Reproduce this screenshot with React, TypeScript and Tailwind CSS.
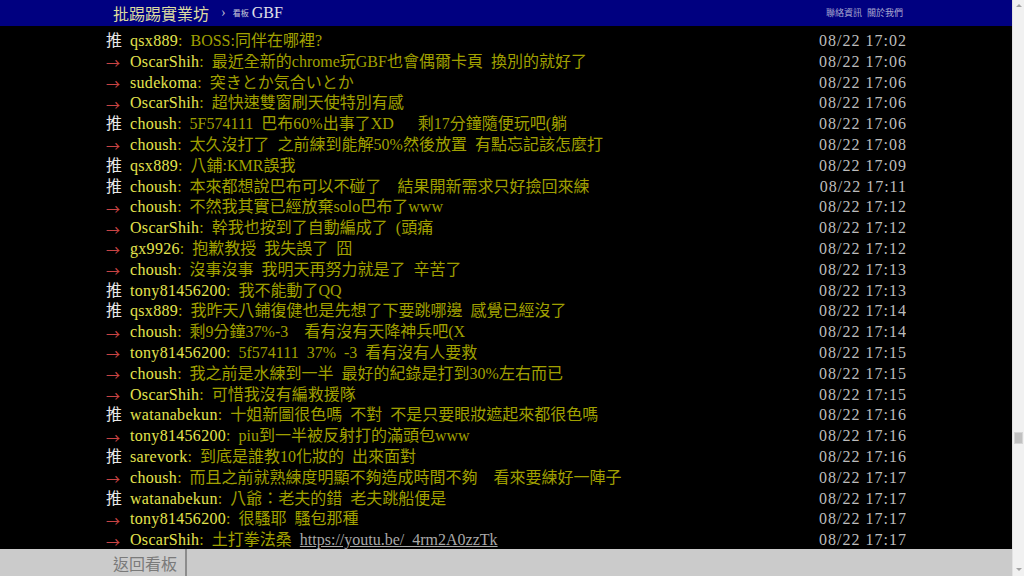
import React from 'react'

type Push = { tag: '推' | '→'; user: string; text: string; time: string; link?: string }

const pushes: Push[] = [
  { tag: '推', user: 'qsx889', text: 'BOSS:同伴在哪裡?', time: '08/22 17:02' },
  { tag: '→', user: 'OscarShih', text: '最近全新的chrome玩GBF也會偶爾卡頁 換別的就好了', time: '08/22 17:06' },
  { tag: '→', user: 'sudekoma', text: '突きとか気合いとか', time: '08/22 17:06' },
  { tag: '→', user: 'OscarShih', text: '超快速雙窗刷天使特別有感', time: '08/22 17:06' },
  { tag: '推', user: 'choush', text: '5F574111 巴布60%出事了XD   剩17分鐘隨便玩吧(躺', time: '08/22 17:06' },
  { tag: '→', user: 'choush', text: '太久沒打了 之前練到能解50%然後放置 有點忘記該怎麼打', time: '08/22 17:08' },
  { tag: '推', user: 'qsx889', text: '八鋪:KMR誤我', time: '08/22 17:09' },
  { tag: '推', user: 'choush', text: '本來都想說巴布可以不碰了  結果開新需求只好撿回來練', time: '08/22 17:11' },
  { tag: '→', user: 'choush', text: '不然我其實已經放棄solo巴布了www', time: '08/22 17:12' },
  { tag: '→', user: 'OscarShih', text: '幹我也按到了自動編成了 (頭痛', time: '08/22 17:12' },
  { tag: '→', user: 'gx9926', text: '抱歉教授 我失誤了 囧', time: '08/22 17:12' },
  { tag: '→', user: 'choush', text: '沒事沒事 我明天再努力就是了 辛苦了', time: '08/22 17:13' },
  { tag: '推', user: 'tony81456200', text: '我不能動了QQ', time: '08/22 17:13' },
  { tag: '推', user: 'qsx889', text: '我昨天八鋪復健也是先想了下要跳哪邊 感覺已經沒了', time: '08/22 17:14' },
  { tag: '→', user: 'choush', text: '剩9分鐘37%-3  看有沒有天降神兵吧(X', time: '08/22 17:14' },
  { tag: '→', user: 'tony81456200', text: '5f574111 37% -3 看有沒有人要救', time: '08/22 17:15' },
  { tag: '→', user: 'choush', text: '我之前是水練到一半 最好的紀錄是打到30%左右而已', time: '08/22 17:15' },
  { tag: '→', user: 'OscarShih', text: '可惜我沒有編救援隊', time: '08/22 17:15' },
  { tag: '推', user: 'watanabekun', text: '十姐新圖很色嗎 不對 不是只要眼妝遮起來都很色嗎', time: '08/22 17:16' },
  { tag: '→', user: 'tony81456200', text: 'piu到一半被反射打的滿頭包www', time: '08/22 17:16' },
  { tag: '推', user: 'sarevork', text: '到底是誰教10化妝的 出來面對', time: '08/22 17:16' },
  { tag: '→', user: 'choush', text: '而且之前就熟練度明顯不夠造成時間不夠  看來要練好一陣子', time: '08/22 17:17' },
  { tag: '推', user: 'watanabekun', text: '八爺：老夫的錯 老夫跳船便是', time: '08/22 17:17' },
  { tag: '→', user: 'tony81456200', text: '很騷耶 騷包那種', time: '08/22 17:17' },
  { tag: '→', user: 'OscarShih', text: '土打拳法桑 ', link: 'https://youtu.be/_4rm2A0zzTk', time: '08/22 17:17' },
]

const PushRow = ({ p }: { p: Push }) => (
  <div className="flex justify-between items-center h-[20.8px] leading-[20.8px] whitespace-pre overflow-hidden">
    <div className="flex items-center [word-spacing:4px]">
      {p.tag === '推' ? (
        <span className="w-6 shrink-0 text-[#e8e8e8]">推</span>
      ) : (
        <span className="w-6 shrink-0 text-[#c84444] font-['Noto_Sans_CJK_TC',sans-serif] text-[14px] leading-[20px]">→</span>
      )}
      <span className="text-[#e4e44e] tracking-[0.3px]">{p.user}</span>
      <span className="text-[#a0a000]">
        : {p.text}
        {p.link && <span className="text-[#a8a8a8] underline">{p.link}</span>}
      </span>
    </div>
    <span className="text-[#bdbdbd] tracking-[1px] -mr-[1px] shrink-0 [word-spacing:0px]">{p.time}</span>
  </div>
)

const App = () => {
  return (
    <div className="flex w-[1024px] h-[576px] overflow-hidden bg-black font-['Liberation_Serif','Noto_Sans_CJK_TC',serif]">
      <div className="flex flex-col flex-1 min-w-0">
        <div className="flex justify-between items-center h-[26px] shrink-0 bg-[#000080]">
          <div className="flex items-center ml-[113px]">
            <span className="text-[16px] text-[#dcdca0] font-['Noto_Sans_CJK_TC',sans-serif] leading-none">批踢踢實業坊</span>
            <span className="ml-3 text-[14px] text-[#b8b8d0] leading-none">›</span>
            <span className="ml-[7px] text-[8px] text-[#c8c8d8] font-['Noto_Sans_CJK_TC',sans-serif]">看板</span>
            <span className="ml-[3px] text-[16px] text-[#e0e0e8] leading-none">GBF</span>
          </div>
          <div className="mr-[109px] flex gap-[5px] text-[9px] text-[#a8a8d0] font-['Noto_Sans_CJK_TC',sans-serif]">
            <span>聯絡資訊</span>
            <span>關於我們</span>
          </div>
        </div>
        <div className="flex-1 min-h-0 overflow-hidden pt-[5px]">
          <div className="w-[800px] mx-auto text-[16px]">
            {pushes.map((p, i) => (
              <PushRow key={i} p={p} />
            ))}
          </div>
        </div>
        <div className="flex items-center h-[27px] shrink-0 bg-[#cbcbcb]">
          <span className="ml-[113px] w-[72px] text-[16px] text-[#7a7a7a] font-['Noto_Sans_CJK_TC',sans-serif]">返回看板</span>
          <div className="w-[2px] h-full bg-[#8c8c8c]" />
        </div>
      </div>
      <div className="flex flex-col items-center w-[12px] shrink-0 bg-[#f1f1f1] border-l border-[#e2e2e2]">
        <div className="mt-[4px] w-0 h-0 border-x-[3px] border-x-transparent border-b-[3px] border-b-[#a3a3a3]" />
        <div className="mt-[425px] w-[9px] h-[12px] bg-[#c1c1c1] border border-[#d6d6d6]" />
        <div className="mt-auto mb-[5px] w-0 h-0 border-x-[3px] border-x-transparent border-t-[3px] border-t-[#a3a3a3]" />
      </div>
    </div>
  )
}

export default App
